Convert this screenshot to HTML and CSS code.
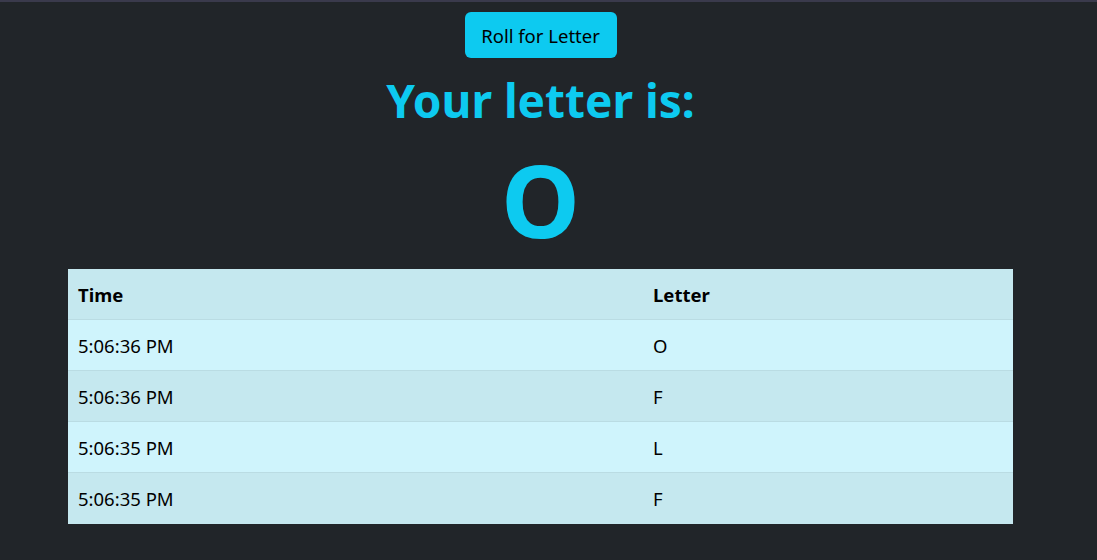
FILE: index.html
```html
<!DOCTYPE html>
<html lang="en">
<head>
<meta charset="utf-8">
<title>Roll for Letter</title>
<link rel="stylesheet" href="styles.css">
</head>
<body>
<div class="top-strip"></div>
<main class="page">
  <button class="roll-btn" type="button">Roll for Letter</button>
  <h1 class="title">Your letter is:</h1>
  <div class="letter">O</div>
  <table class="history">
    <thead>
      <tr><th class="col-time">Time</th><th>Letter</th></tr>
    </thead>
    <tbody>
      <tr><td>5:06:36 PM</td><td>O</td></tr>
      <tr><td>5:06:36 PM</td><td>F</td></tr>
      <tr><td>5:06:35 PM</td><td>L</td></tr>
      <tr><td>5:06:35 PM</td><td>F</td></tr>
    </tbody>
  </table>
</main>
</body>
</html>
```

FILE: styles.css
```css
html, body {
  margin: 0;
  padding: 0;
  background: #212529;
}
body {
  font-family: "Noto Sans", "Open Sans", sans-serif;
  color: #000;
  height: 560px;
  overflow: hidden;
}
.top-strip {
  height: 2px;
  background: #3a3a4c;
}
.page {
  width: 1081px;
  display: flex;
  flex-direction: column;
  align-items: center;
}
.roll-btn {
  margin-top: 10px;
  height: 46px;
  width: 152px;
  padding: 0;
  border: none;
  border-radius: 6px;
  background: #0dcaf0;
  color: #000;
  font-family: inherit;
  font-size: 18.5px;
  cursor: pointer;
}
.title {
  margin: 0;
  height: 84px;
  line-height: 84px;
  color: #0dcaf0;
  font-size: 46px;
  font-weight: 700;
}
.letter {
  height: 127px;
  line-height: 114px;
  color: #0dcaf0;
  font-size: 100px;
  font-weight: 700;
}
.history {
  width: 945px;
  border-collapse: collapse;
  font-size: 18.5px;
  text-align: left;
}
.history th,
.history td {
  height: 50px;
  padding: 0 10px;
  border-bottom: 1px solid #badce3;
  vertical-align: middle;
}
.history tr:last-child td {
  height: 51px;
  border-bottom: none;
}
.history th {
  font-weight: 700;
}
.history .col-time {
  width: 555px;
}
.history thead tr,
.history tbody tr:nth-child(even) {
  background: #c5e8ef;
}
.history tbody tr:nth-child(odd) {
  background: #cff4fc;
}
```
